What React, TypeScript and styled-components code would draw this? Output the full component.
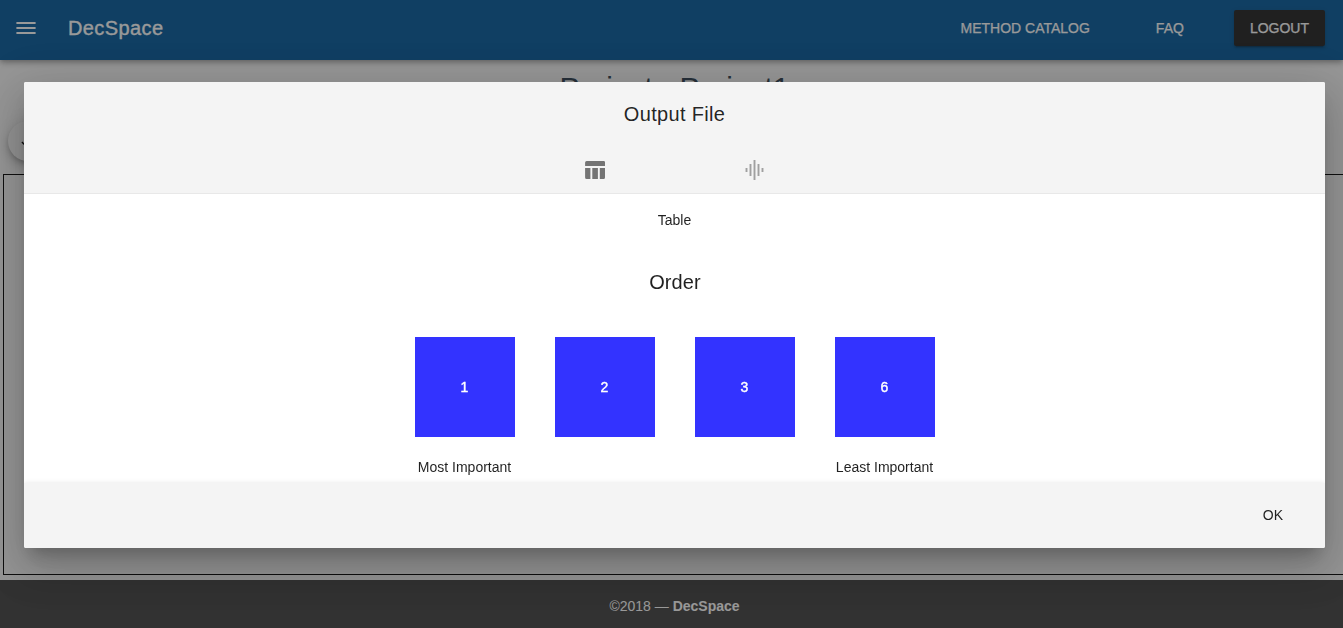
import React from 'react';
import styled, { createGlobalStyle } from 'styled-components';

const GlobalStyle = createGlobalStyle`
  *, *::before, *::after { box-sizing: border-box; }
  html, body { margin: 0; height: 100%; overflow: hidden; }
  body {
    font-family: "Liberation Sans", Arial, sans-serif;
    font-size: 14px;
    line-height: 1.5;
    color: rgba(0, 0, 0, 0.87);
  }
  h1, h2, h3, p { margin: 0; font-weight: 400; }
`;

const Page = styled.div`
  display: flex;
  flex-direction: column;
  height: 628px;
  overflow: hidden;
  background: #fafafa;
`;

const Toolbar = styled.header`
  position: relative;
  display: flex;
  align-items: center;
  flex: none;
  height: 60px;
  padding: 0 18px 4px 14px;
  background: #03599b;
  color: #fff;
  box-shadow: 0 2px 4px -1px rgba(0, 0, 0, 0.2), 0 4px 5px rgba(0, 0, 0, 0.14),
    0 1px 10px rgba(0, 0, 0, 0.12);
`;

const Brand = styled.span`
  margin-left: 30px;
  font-size: 20px;
  letter-spacing: 0.02em;
  -webkit-text-stroke: 0.35px currentColor;
`;

const Nav = styled.nav`
  display: flex;
  align-items: center;
  margin-left: auto;
`;

const NavButton = styled.button<{ $raised?: boolean; $gap: number }>`
  height: 36px;
  margin: 0 0 0 ${(p) => p.$gap}px;
  padding: 0 16px;
  border: 0;
  border-radius: 2px;
  font: 14px "Liberation Sans", Arial, sans-serif;
  color: #fff;
  -webkit-text-stroke: 0.25px currentColor;
  background: ${(p) => (p.$raised ? '#212121' : 'transparent')};
  box-shadow: ${(p) =>
    p.$raised
      ? '0 3px 1px -2px rgba(0,0,0,.2), 0 2px 2px rgba(0,0,0,.14), 0 1px 5px rgba(0,0,0,.12)'
      : 'none'};
`;

const Workspace = styled.main`
  display: flex;
  flex-direction: column;
  flex: 1;
  padding: 5px 0 5px 3px;
`;

const ProjectTitle = styled.h1`
  height: 45px;
  padding-left: 3px;
  font-size: 30px;
  line-height: 45px;
  text-align: center;
  color: #2c3e50;
`;

const Fab = styled.button`
  display: flex;
  align-items: center;
  justify-content: center;
  width: 40px;
  height: 40px;
  margin: 11px 5px 13px;
  padding: 0 1px 0 0;
  border: 0;
  border-radius: 50%;
  background: #f5f5f5;
  color: #000;
  box-shadow: 0 3px 5px -1px rgba(0, 0, 0, 0.2), 0 6px 10px rgba(0, 0, 0, 0.14),
    0 1px 18px rgba(0, 0, 0, 0.12);
`;

const Canvas = styled.section`
  flex: 1;
  border: 1px solid #000;
  border-right: 0;
`;

const Footer = styled.footer`
  display: flex;
  align-items: center;
  justify-content: center;
  flex: none;
  height: 48px;
  padding: 4px 0 0 6px;
  background: #424242;
  color: #fff;
  white-space: pre;
`;

const Scrim = styled.div`
  position: fixed;
  inset: 0;
  background: rgba(33, 33, 33, 0.46);
`;

const DialogLayer = styled.div`
  position: fixed;
  inset: 0;
  display: flex;
  align-items: center;
  padding: 2px 18px 0 24px;
`;

const Dialog = styled.section`
  display: flex;
  flex-direction: column;
  width: 100%;
  height: 466px;
  border-radius: 2px;
  overflow: hidden;
  background: #fff;
  box-shadow: 0 11px 15px -7px rgba(0, 0, 0, 0.2), 0 24px 38px 3px rgba(0, 0, 0, 0.14),
    0 9px 46px 8px rgba(0, 0, 0, 0.12);
`;

const DialogHeader = styled.header`
  flex: none;
  height: 112px;
  background: #f4f4f4;
  border-bottom: 1px solid #e8e8e8;
`;

const Heading = styled.h2`
  height: 64px;
  font-size: 20px;
  line-height: 64px;
  letter-spacing: 0.016em;
  text-align: center;
`;

const Tabs = styled.div`
  display: flex;
  justify-content: center;
  height: 48px;
`;

const Tab = styled.button<{ $active?: boolean }>`
  display: flex;
  align-items: center;
  justify-content: center;
  width: 160px;
  padding: 0;
  border: 0;
  background: none;
  color: ${(p) => (p.$active ? '#747474' : '#a0a0a0')};
`;

const DialogBody = styled.div`
  display: flex;
  flex-direction: column;
  align-items: center;
  flex: 1;
  padding-top: 16px;
`;

const Caption = styled.p`
  height: 21px;
  line-height: 21px;
  text-align: center;
`;

const OrderHeading = styled(Heading)`
  margin-top: 19px;
  padding-left: 1px;
  letter-spacing: 0.005em;
`;

const Ranking = styled.div`
  display: flex;
  gap: 40px;
  margin-top: 23px;
`;

const RankColumn = styled.div`
  display: flex;
  flex-direction: column;
  align-items: center;
  gap: 20px;
  width: 100px;
`;

const RankTile = styled.div`
  display: flex;
  align-items: center;
  justify-content: center;
  width: 100px;
  height: 100px;
  background: #33f;
  color: #fff;
  -webkit-text-stroke: 0.4px currentColor;
`;

const RankCaption = styled(Caption)`
  white-space: nowrap;
`;

const DialogActions = styled.footer`
  display: flex;
  align-items: center;
  justify-content: flex-end;
  flex: none;
  height: 65px;
  padding: 0 26px 2px 0;
  background: #f4f4f4;
  box-shadow: 0 0 5px rgba(0, 0, 0, 0.1);
`;

const OkButton = styled.button`
  height: 36px;
  padding: 0 16px;
  border: 0;
  background: none;
  font: 14px "Liberation Sans", Arial, sans-serif;
  color: rgba(0, 0, 0, 0.87);
`;

const icons = {
  menu: 'M2.4 6h19.2v2H2.4zM2.4 11h19.2v2H2.4zM2.4 16h19.2v2H2.4z',
  check: 'M9 16.17L4.83 12l-1.42 1.41L9 19 21 7l-1.41-1.41z',
};

const Icon = ({ path, size = 24 }: { path: string; size?: number }) => (
  <svg width={size} height={size} viewBox="0 0 24 24" fill="currentColor">
    <path d={path} />
  </svg>
);

const TableIcon = () => (
  <svg width="21" height="18" viewBox="0 0 21 18" fill="currentColor">
    <path d="M2.6 0h17a1.5 1.5 0 0 1 1.5 1.5V5h-20V1.5A1.5 1.5 0 0 1 2.6 0z" />
    <path d="M1.1 7h5.3v11H2.6a1.5 1.5 0 0 1-1.5-1.5zM8.3 7h5.6v11H8.3zM15.8 7H21v9.5a1.5 1.5 0 0 1-1.5 1.5h-3.7z" />
  </svg>
);

const WaveIcon = () => (
  <svg width="21" height="20" viewBox="0 0 21 20" stroke="currentColor" strokeWidth="1.9">
    <path d="M2.5 8v4M6.5 4v12M10.5 0v20M14.5 4v12M18.5 8v4" />
  </svg>
);

const ranks = [
  { value: 1, caption: 'Most Important' },
  { value: 2 },
  { value: 3 },
  { value: 6, caption: 'Least Important' },
];

export default function App() {
  return (
    <>
      <GlobalStyle />
      <Page>
        <Toolbar>
          <Icon path={icons.menu} />
          <Brand>DecSpace</Brand>
          <Nav>
            <NavButton $gap={0}>METHOD CATALOG</NavButton>
            <NavButton $gap={34}>FAQ</NavButton>
            <NavButton $gap={34} $raised>LOGOUT</NavButton>
          </Nav>
        </Toolbar>
        <Workspace>
          <ProjectTitle>Project - Project1</ProjectTitle>
          <Fab><Icon path={icons.check} size={17} /></Fab>
          <Canvas />
        </Workspace>
        <Footer>©2018 — <strong>DecSpace</strong></Footer>
      </Page>
      <Scrim />
      <DialogLayer>
        <Dialog>
          <DialogHeader>
            <Heading>Output File</Heading>
            <Tabs>
              <Tab $active><TableIcon /></Tab>
              <Tab><WaveIcon /></Tab>
            </Tabs>
          </DialogHeader>
          <DialogBody>
            <Caption>Table</Caption>
            <OrderHeading>Order</OrderHeading>
            <Ranking>
              {ranks.map((rank) => (
                <RankColumn key={rank.value}>
                  <RankTile>{rank.value}</RankTile>
                  {rank.caption && <RankCaption>{rank.caption}</RankCaption>}
                </RankColumn>
              ))}
            </Ranking>
          </DialogBody>
          <DialogActions>
            <OkButton>OK</OkButton>
          </DialogActions>
        </Dialog>
      </DialogLayer>
    </>
  );
}
